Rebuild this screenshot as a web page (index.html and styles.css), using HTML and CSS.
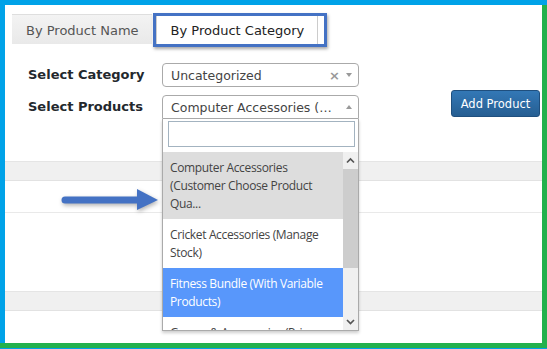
FILE: index.html
```html
<!DOCTYPE html>
<html lang="en">
<head>
    <meta charset="UTF-8">
    <title>Add Products</title>
    <link rel="stylesheet" href="styles.css">
</head>
<body>
    <div class="frame">
        <div class="frame-inner">
            <div class="page">

                <!-- tabs -->
                <div class="tabs">
                    <div class="tab">By Product Name</div>
                    <div class="tab active">By Product Category</div>
                </div>
                <div class="tab-mark"></div>

                <!-- form -->
                <div class="form">
                    <div class="form-row">
                        <label class="form-label">Select Category</label>
                        <div class="select">
                            <span class="select-text">Uncategorized</span>
                            <span class="select-clear">×</span>
                            <span class="select-arrow"></span>
                        </div>
                    </div>
                    <div class="form-row">
                        <label class="form-label">Select Products</label>
                        <div class="select open">
                            <span class="select-text wide">Computer Accessories (Customer Choose Product Qua...</span>
                            <span class="select-arrow up"></span>

                            <div class="dropdown">
                                <div class="dropdown-search"><input type="text"></div>
                                <div class="dropdown-results">
                                    <ul class="options">
                                        <li class="option hover">Computer Accessories (Customer Choose Product Qua...</li>
                                        <li class="option">Cricket Accessories (Manage Stock)</li>
                                        <li class="option selected">Fitness Bundle (With Variable Products)</li>
                                        <li class="option">Games &amp; Accessories (Price Range)</li>
                                    </ul>
                                    <div class="scrollbar">
                                        <div class="sb-btn">
                                            <svg width="15" height="17" viewBox="0 0 15 17"><polyline points="4,10.5 7.5,7 11,10.5" fill="none" stroke="#555" stroke-width="1.7"/></svg>
                                        </div>
                                        <div class="sb-thumb"></div>
                                        <div class="sb-track"></div>
                                        <div class="sb-btn">
                                            <svg width="15" height="17" viewBox="0 0 15 17"><polyline points="4,7 7.5,10.5 11,7" fill="none" stroke="#555" stroke-width="1.7"/></svg>
                                        </div>
                                    </div>
                                </div>
                            </div>
                        </div>
                        <button class="btn">Add Product</button>
                    </div>
                </div>

                <!-- table behind dropdown -->
                <div class="table">
                    <div class="band"></div>
                    <div class="row row-short"></div>
                    <div class="row row-tall"></div>
                    <div class="band"></div>
                </div>

                <!-- annotation arrow -->
                <svg class="pointer" width="104" height="32" viewBox="0 0 104 32">
                    <line x1="7" y1="16" x2="84" y2="16" stroke="#4472c4" stroke-width="7" stroke-linecap="round"/>
                    <polygon points="79,5 100,16 79,26" fill="#4472c4"/>
                </svg>
            </div>
        </div>
    </div>
</body>
</html>
```

FILE: styles.css
```css
/* global */
body {
    margin: 0;
    font-family: 'DejaVu Sans', Verdana, sans-serif;
}

/* coloured screenshot frame */
.frame {
    background-color: #00a2e8;
    padding: 5px 0 1px 0;
}

.frame-inner {
    background-color: #22b14c;
    padding: 0 5px 5px 0;
}

.page {
    position: relative;
    height: 338px;
    border-left: 5px solid #00a2e8;
    background-color: #fff;
    overflow: hidden;
}

/* tabs */
.tabs {
    display: flex;
    gap: 4px;
    padding: 9px 0 0 7px;
}

.tab {
    height: 30px;
    box-sizing: border-box;
    padding: 2px 13px 0 14px;
    line-height: 27px;
    font-size: 13px;
    color: #555;
    background: linear-gradient(#f3f3f3, #e9e9e9);
    border-top: 1px solid #dedede;
}

.tab.active {
    color: #222;
    background: #fff;
    border: 1px solid #ccc;
    border-bottom: none;
}

/* blue highlight round the active tab */
.tab-mark {
    position: absolute;
    left: 148px;
    top: 8px;
    width: 174px;
    height: 34px;
    box-sizing: border-box;
    border: 3px solid #4472c4;
    box-shadow: 1px 2px 3px rgba(0, 0, 0, 0.35);
}

/* form */
.form {
    display: flex;
    flex-direction: column;
    gap: 8px;
    padding: 19px 2px 0 23px;
}

.form-row {
    display: flex;
    align-items: flex-start;
}

.form-label {
    width: 134px;
    line-height: 24px;
    font-size: 13px;
    font-weight: bold;
    color: #23282d;
}

.select {
    position: relative;
    width: 197px;
    height: 24px;
    box-sizing: border-box;
    display: flex;
    align-items: center;
    padding: 0 6px 0 8px;
    border: 1px solid #aaa;
    border-radius: 4px;
    font-size: 12.5px;
    color: #444;
}

.select.open {
    border-radius: 4px 4px 0 0;
}

.select-text {
    flex: 1;
    white-space: nowrap;
    overflow: hidden;
    text-overflow: ellipsis;
    padding-right: 4px;
}

.select-text.wide {
    padding-right: 13px;
}

.select-clear {
    color: #999;
    font-weight: bold;
    font-size: 13px;
    margin-right: 6px;
}

.select-arrow {
    width: 0;
    height: 0;
    border-style: solid;
    border-width: 4px 3px 0 3px;
    border-color: #999 transparent transparent transparent;
}

.select-arrow.up {
    border-width: 0 3px 4px 3px;
    border-color: transparent transparent #999 transparent;
}

/* button */
.btn {
    margin: -5px 0 0 auto;
    width: 89px;
    height: 27px;
    padding: 0;
    border: 1px solid #1f4f7e;
    border-radius: 3px;
    background: linear-gradient(#3378b6, #265e92);
    color: #fff;
    font-family: 'DejaVu Sans', Verdana, sans-serif;
    font-size: 11.5px;
}

/* dropdown list */
.dropdown {
    position: absolute;
    left: -1px;
    top: 23px;
    width: 197px;
    box-sizing: border-box;
    background-color: #fff;
    border: 1px solid #aaa;
    border-top: none;
    box-shadow: 0 2px 3px rgba(0, 0, 0, 0.2);
    z-index: 2;
}

.dropdown-search {
    padding: 2px 3px 5px 5px;
}

.dropdown-search input {
    display: block;
    width: 100%;
    height: 26px;
    box-sizing: border-box;
    margin: 0;
    border: 1px solid #a3b3c0;
    outline: none;
}

.dropdown-results {
    display: flex;
    height: 178px;
    overflow: hidden;
}

.options {
    flex: 1;
    margin: 0;
    padding: 0;
    list-style: none;
    font-family: 'Open Sans', sans-serif;
    font-size: 12px;
    letter-spacing: -0.35px;
    line-height: 18px;
    color: #444;
}

.option {
    padding: 7px 8px 6px 7px;
}

.option.hover {
    background-color: #ddd;
}

.option.selected {
    background-color: #5897fb;
    color: #fff;
}

/* drawn scrollbar */
.scrollbar {
    width: 15px;
    display: flex;
    flex-direction: column;
    background-color: #f0f0f0;
}

.sb-btn {
    height: 17px;
}

.sb-btn svg {
    display: block;
}

.sb-thumb {
    height: 99px;
    background-color: #cdcdcd;
}

.sb-track {
    flex: 1;
}

/* table rows behind */
.table {
    margin-top: 42px;
}

.band {
    height: 18px;
    background-color: #f0f0f0;
    border-top: 1px solid #e5e5e5;
    border-bottom: 1px solid #e2e2e2;
}

.row-short {
    height: 31px;
    border-bottom: 1px solid #e9e9e9;
}

.row-tall {
    height: 78px;
}

/* annotation arrow */
.pointer {
    position: absolute;
    left: 53px;
    top: 179px;
    filter: drop-shadow(1px 2px 2px rgba(0, 0, 0, 0.3));
}
```
